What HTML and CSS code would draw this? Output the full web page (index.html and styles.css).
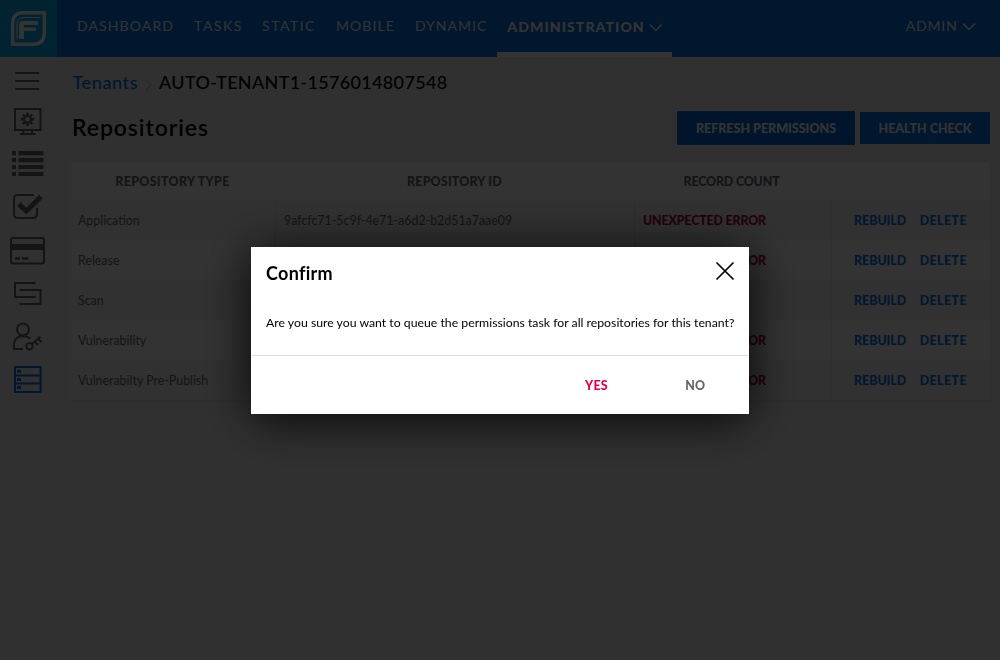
FILE: index.html
```html
<!DOCTYPE html>
<html lang="en">
<head>
<meta charset="utf-8">
<title>Repositories</title>
<link rel="stylesheet" href="styles.css">
</head>
<body>
<div class="app">
  <header class="topbar">
    <a class="logo">
      <svg width="57" height="57" viewBox="0 0 57 57"><path stroke="#fff" stroke-width="3.500" d="M23 12.700H44.300V33Q44.300 44.300 33 44.300H12.700V23Q12.700 12.700 23 12.700Z"/><path stroke="#fff" stroke-width="1.200" d="M40.500 17.500H24Q17 17.500 17 24.500V39.500"/><path fill="#fff" d="M23 21H38V25H24V27.500H36V31H24V39H19V25Q19 21 23 21Z"/></svg>
    </a>
    <nav class="nav">
      <a class="nav-item n1"><span>DASHBOARD</span></a>
      <a class="nav-item n2"><span>TASKS</span></a>
      <a class="nav-item n3"><span>STATIC</span></a>
      <a class="nav-item n4"><span>MOBILE</span></a>
      <a class="nav-item n5"><span>DYNAMIC</span></a>
      <a class="nav-item active"><span>ADMINISTRATION</span><svg class="chev" width="14" height="9" viewBox="0 0 14 9"><path d="M1 1.500L7 7.500L13 1.500"/></svg></a>
    </nav>
    <a class="user"><span>ADMIN</span><svg class="chev" width="14" height="9" viewBox="0 0 14 9"><path d="M1 1.500L7 7.500L13 1.500"/></svg></a>
  </header>
  <div class="body">
    <aside class="side">
      <svg viewBox="0 57 57 43"><path stroke-width="1.800" d="M15 73H39M15 81H39M15 89H39"/></svg>
      <svg viewBox="0 100 57 43"><path stroke-width="2" d="M15 109H40.500V130H15ZM23.500 130V133.500M32 130V133.500M20 134H35.500"/><circle cx="27.500" cy="119.300" r="3.500" stroke-width="2.200"/><path stroke-width="2.400" d="M27.500 112.500V116M27.500 122.500V126M20.800 119.300H24M31 119.300H34.200M22.800 114.600L25 116.800M32.200 114.600L30 116.800M22.800 124L25 121.800M32.200 124L30 121.800"/></svg>
      <svg viewBox="0 143 57 43"><path stroke-width="4.200" d="M12 153.200H16M18.500 153.200H43.500M12 160.200H16M18.500 160.200H43.500M12 167H16M18.500 167H43.500M12 174H16M18.500 174H43.500"/></svg>
      <svg viewBox="0 186 57 43"><path stroke-width="2" d="M34 195H18Q14 195 14 199V214Q14 218 18 218H33Q37 218 37 214V208"/><path stroke-width="5" d="M18.800 204.200L26.500 211L41 196.500"/></svg>
      <svg viewBox="0 229 57 43"><rect x="11" y="238" width="33" height="25.500" rx="2" stroke-width="2"/><path stroke-width="6" d="M11 247H44"/><path stroke-width="2.500" d="M15 258.500H20M22 258.500H28.500"/></svg>
      <svg viewBox="0 272 57 43"><path stroke-width="2" d="M35.500 283H15V297H35.500M19.500 290H40.500V304H19.500"/></svg>
      <svg viewBox="0 315 57 43"><circle cx="23" cy="329.500" r="6" stroke-width="2"/><path stroke-width="2" d="M30.500 338.500Q27 336 22 336Q14 337 14 345V349H23"/><circle cx="29.500" cy="346.300" r="3.200" stroke-width="2"/><path stroke-width="2" d="M32 344L40.500 336.500M38 338.500L41.500 342M34.500 341.500L38 345"/></svg>
      <svg class="on" viewBox="0 358 57 43"><path stroke-width="2" d="M15 367H40.500V392H15ZM15 375.500H40.500M15 383.500H40.500"/><path stroke-width="3" d="M17 371.300H21M17 379.500H21M17 387.500H21"/></svg>
    </aside>
    <main class="main">
      <div class="crumbs"><a>Tenants</a><svg width="7" height="12" viewBox="0 0 7 12"><path d="M1 1L6 6L1 11"/></svg><span>AUTO-TENANT1-1576014807548</span></div>
      <div class="titlebar">
        <h1><span>Repositories</span></h1>
        <button class="btn focus"><span>REFRESH PERMISSIONS</span></button>
        <button class="btn b2"><span>HEALTH CHECK</span></button>
      </div>
      <div class="grid">
        <div class="row head"><div><span class="wide">REPOSITORY TYPE</span></div><div><span class="id">REPOSITORY ID</span></div><div><span class="count">RECORD COUNT</span></div><div></div></div>
        <div class="row alt"><div><span>Application</span></div><div><span>9afcfc71-5c9f-4e71-a6d2-b2d51a7aae09</span></div><div><b>UNEXPECTED ERROR</b></div><div><a>REBUILD</a><a class="del">DELETE</a></div></div>
        <div class="row"><div><span>Release</span></div><div></div><div><b>UNEXPECTED ERROR</b></div><div><a>REBUILD</a><a class="del">DELETE</a></div></div>
        <div class="row alt"><div><span>Scan</span></div><div></div><div></div><div><a>REBUILD</a><a class="del">DELETE</a></div></div>
        <div class="row"><div><span>Vulnerability</span></div><div></div><div><b>UNEXPECTED ERROR</b></div><div><a>REBUILD</a><a class="del">DELETE</a></div></div>
        <div class="row alt"><div><span>Vulnerabilty Pre-Publish</span></div><div></div><div><b>UNEXPECTED ERROR</b></div><div><a>REBUILD</a><a class="del">DELETE</a></div></div>
      </div>
    </main>
  </div>
</div>
<div class="overlay">
  <section class="dialog">
    <div class="dlg-head"><h2><span>Confirm</span></h2><svg width="20" height="20" viewBox="0 0 20 20"><path d="M1.500 1.500L18.500 18.500M18.500 1.500L1.500 18.500"/></svg></div>
    <p><span>Are you sure you want to queue the permissions task for all repositories for this tenant?</span></p>
    <div class="dlg-foot"><a class="yes">YES</a><a class="no">NO</a></div>
  </section>
</div>
</body>
</html>
```
FILE: styles.css
```css
* { box-sizing: border-box; }
body { margin: 0; width: 1000px; height: 660px; overflow: hidden; background: #f0f0f0; font: 12.4px Lato, sans-serif; color: #656668; }
.app { height: 660px; display: flex; flex-direction: column; }
.topbar { height: 57px; background: #0073e7; display: flex; color: #fff; font-size: 14px; letter-spacing: 1px; }
.logo { width: 57px; height: 57px; background: #00abf3; }
svg { display: block; fill: none; }
.nav { display: flex; padding-left: 10px; }
.nav-item { display: flex; padding: 17px 10px 0; height: 57px; line-height: 18px; white-space: nowrap; }
.n1 { letter-spacing: 1.12px; }
.n2 { letter-spacing: 1.5px; padding-right: 9.2px; }
.n3 { letter-spacing: 1.5px; }
.n4 { letter-spacing: 1.1px; }
.active { font-weight: 900; width: 175px; border-bottom: 5px solid #fff; padding-top: 18px; letter-spacing: 1.1px; }
.chev { stroke: #fff; stroke-width: 1.5; margin: 5px 0 0 4px; }
.user { display: flex; margin-left: auto; padding: 17px 24.500px 0 0; line-height: 18px; letter-spacing: .8px; }
.body { flex: 1; display: flex; }
.side { width: 58px; flex: none; border-right: 1px solid #e6e6e6; }
.side svg { width: 57px; height: 43px; stroke: #656668; }
.side .on { stroke: #0073e7; }
.main { width: 942px; padding: 11px 10px 0 12px; }
.crumbs { display: flex; height: 28px; line-height: 28px; padding-left: 2.500px; font-size: 18px; color: #000; letter-spacing: .33px; font-weight: 500; }
.crumbs a { color: #0073e7; letter-spacing: .6px; }
.crumbs svg { stroke: #bbb; margin: 11px 7px 0 7px; }
.titlebar { display: flex; height: 66px; padding: 16px 0 0 2px; }
h1 { margin: -1px auto 0 0; font-size: 23px; line-height: 32px; font-weight: 600; color: #000; letter-spacing: .92px; }
.btn { border: 0; padding: 0; height: 32px; width: 130px; background: #0073e7; color: #fff; font: 900 12.4px Lato, sans-serif; letter-spacing: .06px; }
.focus { width: 176px; margin-right: 6px; background: #006ad5; box-shadow: 0 0 0 1px #0079c8; }
.grid { background: #fff; box-shadow: 1px 1px 2px #ddd; }
.row { display: grid; grid-template-columns: 206px 359px 197px 158px; height: 40px; line-height: 41px; }
.row > div { padding-left: 8px; border-right: 1px solid #e4e4e4; white-space: nowrap; }
.row > div:last-child { border: 0; padding-left: 22px; }
.alt { background: #f5f5f5; }
.row.head { height: 38px; line-height: 39px; text-align: center; font-weight: 900; }
.row.head > div { border: 0; padding: 0; }
.wide { letter-spacing: .35px; margin-right: 1px; }
.id { letter-spacing: .2px; margin-right: 2px; }
.count { letter-spacing: -.15px; margin-right: 4px; }
.row b { color: #b0043b; font-weight: 900; letter-spacing: -.15px; }
.row a { color: #0073e7; font-weight: 900; }
.row .del { margin-left: 13.500px; letter-spacing: .4px; }
.overlay { position: fixed; inset: 0; background: rgba(0,0,0,.8); }
.dialog { position: absolute; left: 251px; top: 247px; width: 498px; height: 167px; background: #fff; color: #000; box-shadow: 0 5px 45px rgba(0,0,0,.9); }
.dlg-head { display: flex; justify-content: space-between; padding: 14px 14px 0 15px; }
.dlg-head svg { stroke: #000; stroke-width: 1.7; }
h2 { margin: 0; font-size: 18px; line-height: 24px; height: 24px; font-weight: 700; letter-spacing: .3px; }
.dialog p { margin: 0 1px; padding: 28px 14px 0; height: 71px; line-height: 20px; white-space: nowrap; font-size: 12.28px; border-bottom: 1px solid #ddd; }
.dlg-foot { display: flex; font-size: 12.4px; font-weight: 900; line-height: 19px; padding: 20px 0 0 334px; }
.yes { color: #e5004c; letter-spacing: .25px; }
.no { color: #656668; margin-left: 77.500px; }
```
